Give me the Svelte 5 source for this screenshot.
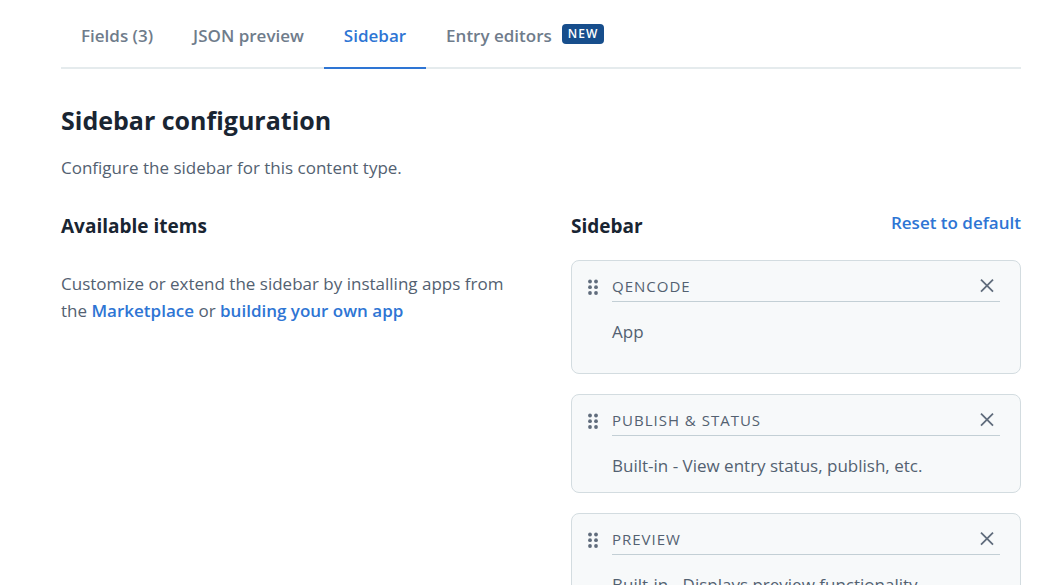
<script>
  let active = $state('Sidebar');
  const tabs = [
    { name: 'Fields (3)' },
    { name: 'JSON preview' },
    { name: 'Sidebar' },
    { name: 'Entry editors', badge: 'NEW' }
  ];

  let items = $state([
    { title: 'Qencode', text: 'App', custom: true },
    { title: 'Publish & Status', text: 'Built-in - View entry status, publish, etc.' },
    { title: 'Preview', text: 'Built-in - Displays preview functionality.' }
  ]);

  function remove(item) {
    items = items.filter((i) => i !== item);
  }
</script>

<main>
  <div class="tabs" role="tablist">
    {#each tabs as tab}
      <button
        class="tab"
        class:active={active === tab.name}
        role="tab"
        aria-selected={active === tab.name}
        onclick={() => (active = tab.name)}
      >
        {tab.name}
        {#if tab.badge}<span class="badge">{tab.badge}</span>{/if}
      </button>
    {/each}
  </div>

  <h1>Sidebar configuration</h1>
  <p class="intro">Configure the sidebar for this content type.</p>

  <div class="columns">
    <section>
      <header class="head"><h2>Available items</h2></header>
      <p class="hint">
        Customize or extend the sidebar by installing apps from the
        <a href="#marketplace">Marketplace</a> or <a href="#build">building your own app</a>
      </p>
    </section>

    <section>
      <header class="head">
        <h2>Sidebar</h2>
        <button class="reset">Reset to default</button>
      </header>
      <ul class="cards">
        {#each items as item (item.title)}
          <li class="card" class:custom={item.custom}>
            <svg class="grip" width="10" height="16" viewBox="0 0 10 16" aria-hidden="true">
              <circle cx="2" cy="2.5" r="1.9" /><circle cx="8" cy="2.5" r="1.9" />
              <circle cx="2" cy="8.2" r="1.9" /><circle cx="8" cy="8.2" r="1.9" />
              <circle cx="2" cy="14" r="1.9" /><circle cx="8" cy="14" r="1.9" />
            </svg>
            <div class="content">
              <div class="title">
                <h3>{item.title}</h3>
                <button class="close" aria-label="Remove {item.title}" onclick={() => remove(item)}>
                  <svg width="14" height="14" viewBox="0 0 14 14" aria-hidden="true">
                    <path d="M1 .7L13 12.7M13 .7L1 12.7" />
                  </svg>
                </button>
              </div>
              <p>{item.text}</p>
            </div>
          </li>
        {/each}
      </ul>
    </section>
  </div>
</main>

<style>
  :global(body) {
    margin: 0;
    background: #fff;
    overflow: hidden;
  }
  main {
    box-sizing: border-box;
    height: 100vh;
    overflow: hidden;
    padding: 2px 43px 0 61px;
    font-family: 'Segoe UI', 'Open Sans', 'Noto Sans', sans-serif;
    font-size: 17px;
    line-height: 27px;
    color: #536171;
  }
  h1, h2, h3, p, ul {
    margin: 0;
    padding: 0;
  }
  button {
    border: 0;
    padding: 0;
    background: none;
    font: inherit;
    color: inherit;
    cursor: pointer;
  }
  .tabs {
    display: flex;
    box-shadow: inset 0 -2px #e5ebed;
  }
  .tab {
    display: flex;
    align-items: center;
    gap: 10px;
    height: 67px;
    padding: 0 20px;
    font-weight: 600;
    color: #6f7c8b;
    white-space: nowrap;
  }
  .tab.active {
    color: #2e75d4;
    box-shadow: inset 0 -2px #2e75d4;
  }
  .badge {
    margin-bottom: 4px;
    padding: 0 6px;
    border-radius: 4px;
    background: #174e8c;
    color: #fff;
    font-size: 12px;
    line-height: 20px;
    letter-spacing: 1px;
  }
  h1 {
    margin-top: 32px;
    font-size: 25px;
    line-height: 38px;
    font-weight: 700;
    color: #192532;
  }
  .intro {
    margin-top: 15px;
  }
  .columns {
    display: grid;
    grid-template-columns: 1fr 1fr;
    gap: 60px;
    margin-top: 28px;
  }
  .head {
    display: flex;
    justify-content: space-between;
    align-items: flex-start;
    height: 51px;
  }
  h2 {
    padding-top: 1px;
    font-size: 19px;
    line-height: 32px;
    font-weight: 700;
    color: #192532;
  }
  .reset,
  a {
    font-weight: 600;
    color: #2e75d4;
    text-decoration: none;
  }
  .hint {
    margin-top: 10px;
  }
  .cards {
    display: grid;
    gap: 20px;
    list-style: none;
  }
  .card {
    display: flex;
    gap: 14px;
    padding: 10px 20px 12px 16px;
    border: 1px solid #d3dce0;
    border-radius: 8px;
    background: #f7f9fa;
  }
  .card.custom {
    padding-bottom: 27px;
  }
  .grip {
    flex: none;
    margin-top: 8px;
    fill: #606c7c;
  }
  .content {
    flex: 1;
  }
  .title {
    display: flex;
    justify-content: space-between;
    align-items: center;
    height: 30px;
    border-bottom: 1px solid #c3cfd5;
  }
  h3 {
    font-size: 15px;
    font-weight: 400;
    letter-spacing: 1px;
    text-transform: uppercase;
  }
  .close {
    display: flex;
    padding: 6px;
  }
  .close path {
    fill: none;
    stroke: #606c7c;
    stroke-width: 1.8;
  }
  .content p {
    margin-top: 16px;
    line-height: 28px;
  }
</style>
